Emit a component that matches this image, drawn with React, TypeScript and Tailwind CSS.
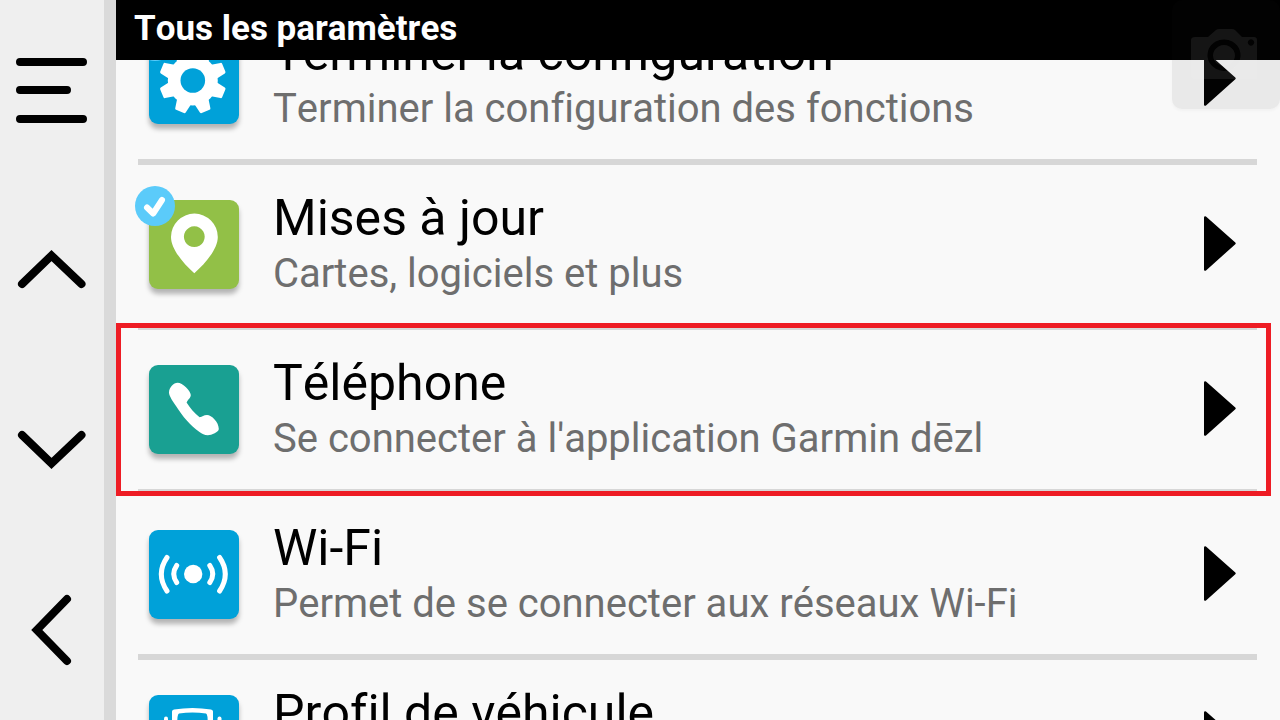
import type { ReactNode } from "react";

const GEAR_ANGLES = [22.5, 67.5, 112.5, 157.5, 202.5, 247.5, 292.5, 337.5];

function GearIcon() {
  return (
    <svg viewBox="0 0 90 89" className="size-full" aria-hidden="true">
      <g fill="#fff" stroke="#fff" strokeWidth="3" strokeLinejoin="round">
        <circle cx="43.8" cy="45.5" r="23.5" />
        {GEAR_ANGLES.map((a) => (
          <path key={a} d="M-6.5 -20 L-4.2 -32 L4.2 -32 L6.5 -20 Z" transform={`translate(43.8 45.5) rotate(${a})`} />
        ))}
      </g>
      <circle cx="43.8" cy="45.5" r="12.3" fill="#00a1d9" />
    </svg>
  );
}

function PinIcon() {
  return (
    <svg viewBox="0 0 90 89" className="size-full" aria-hidden="true">
      <path
        fill="#fff"
        fillRule="evenodd"
        d="M45.3 73.3 C35 64 22 49.5 22 37 A23.4 23.4 0 0 1 68.8 37 C68.8 49.5 55.6 64 45.3 73.3 Z M45.3 26.3 a10.4 10.4 0 1 0 0.01 0 Z"
      />
    </svg>
  );
}

function PhoneIcon() {
  return (
    <svg viewBox="0 0 90 89" className="size-full" aria-hidden="true">
      <path
        fill="#fff"
        d="M20 27.5 C20.2 22.5 24.5 17.8 28.6 17.8 C33.5 17.8 41.6 26 41.8 30 C41.8 33 38.8 34.5 37.6 37.6 C41 43 45.5 48.5 50.6 52.2 C53.5 51.8 54.5 50 58 50 C62.5 50 69.8 57 69.8 64 C69.8 67 62.5 70.2 58.8 70.2 C55.5 70.2 53 68.8 50.5 67 C41.5 60.5 33.5 51.5 27 41 C24 36.5 20 31 20 27.5 Z"
      />
    </svg>
  );
}

function SignalIcon() {
  return (
    <svg viewBox="0 0 90 89" className="size-full" aria-hidden="true">
      <circle cx="44.2" cy="44" r="9.2" fill="#fff" />
      <g fill="none" stroke="#fff" strokeWidth="5" strokeLinecap="round">
        <path d="M27.7 35.5 Q21.8 44 27.7 52.5" />
        <path d="M60.8 35.5 Q66.7 44 60.8 52.5" />
        <path d="M18 27.5 Q6.6 44 18 61" />
        <path d="M70.6 27.5 Q82 44 70.6 61" />
      </g>
    </svg>
  );
}

function TruckIcon() {
  return (
    <svg viewBox="0 0 90 89" className="size-full" aria-hidden="true">
      <path
        fill="#fff"
        fillRule="evenodd"
        d="M23 16.5 Q23 15 25 14.6 Q43.5 11.6 62 14.6 Q64 15 64 16.5 V60 Q64 64 60 64 H27 Q23 64 23 60 Z M30 18.6 Q43.5 16.6 57 18.6 Q58 19 58.5 22 L59.5 40 H27.5 L28.5 22 Q29 19 30 18.6 Z"
      />
      <g stroke="#fff" strokeWidth="4" strokeLinecap="round">
        <path d="M17 23.5 V38" />
        <path d="M70.5 23.5 V38" />
      </g>
    </svg>
  );
}

function CheckBadge() {
  return (
    <svg viewBox="0 0 40 40" className="absolute -top-3.5 -left-3.5 size-10" role="img" aria-label="À jour">
      <circle cx="20" cy="20" r="20" fill="#5bcbfa" />
      <path d="M12 21.5 L18.2 27.5 L27 14" fill="none" stroke="#fff" strokeWidth="6" strokeLinecap="round" strokeLinejoin="round" />
    </svg>
  );
}

function Arrow() {
  return (
    <svg viewBox="0 0 32 55" className="h-[55px] w-8 shrink-0" aria-hidden="true">
      <path d="M1.2 1.4 L30.5 27.3 L1.2 53.6 Z" stroke="#000" strokeWidth="2.4" strokeLinejoin="round" />
    </svg>
  );
}

type Item = {
  title: string;
  detail: string;
  tile: string;
  icon: ReactNode;
  checked?: boolean;
  highlighted?: boolean;
};

const ITEMS: Item[] = [
  {
    title: "Terminer la configuration",
    detail: "Terminer la configuration des fonctions",
    tile: "bg-[#00a1d9]",
    icon: <GearIcon />,
    checked: true,
  },
  {
    title: "Mises à jour",
    detail: "Cartes, logiciels et plus",
    tile: "bg-[#92c047]",
    icon: <PinIcon />,
    checked: true,
  },
  {
    title: "Téléphone",
    detail: "Se connecter à l'application Garmin dēzl",
    tile: "bg-[#19a092]",
    icon: <PhoneIcon />,
    highlighted: true,
  },
  {
    title: "Wi-Fi",
    detail: "Permet de se connecter aux réseaux Wi-Fi",
    tile: "bg-[#00a1d9]",
    icon: <SignalIcon />,
  },
  {
    title: "Profil de véhicule",
    detail: "",
    tile: "bg-[#00a1d9]",
    icon: <TruckIcon />,
  },
];

function Row({ item }: { item: Item }) {
  return (
    <li className="relative pr-[23px] pl-[22px]">
      <button
        type="button"
        className="flex h-[165px] w-full items-start border-b-6 border-[#d7d7d7] pr-[21px] pl-[11px] text-left"
      >
        <span className={`relative mt-[35px] h-[89px] w-[90px] shrink-0 rounded-[9px] shadow-[0_5px_5px_rgba(0,0,0,0.28)] ${item.tile}`}>
          {item.icon}
          {item.checked && <CheckBadge />}
        </span>
        <span className="mt-[23px] ml-[34px] flex min-w-0 flex-1 flex-col gap-0.5 whitespace-nowrap">
          <span className="text-[50px] leading-[60px] text-black">{item.title}</span>
          <span className="text-[40px] leading-[48px] text-[#6e6e6e]">{item.detail}</span>
        </span>
        <span className="mt-[51px]">
          <Arrow />
        </span>
      </button>
      {item.highlighted && (
        <span className="pointer-events-none absolute -top-[7px] right-[9px] -bottom-px left-0 z-10 border-5 border-[#ee1c24]" />
      )}
    </li>
  );
}

const NAV = [
  { label: "Menu", d: "M20 17 H83 M20 45 H67 M20 74 H83" },
  { label: "Défiler vers le haut", d: "M22 59 L51.5 30.5 L81.5 59" },
  { label: "Défiler vers le bas", d: "M22 30 L51.5 58.5 L81.5 30" },
  { label: "Retour", d: "M67 14 L36.8 45 L67 76" },
];

function SideNav() {
  return (
    <nav className="grid w-[116px] shrink-0 grid-rows-4 border-r-12 border-[#dadada] bg-[#efefef]">
      {NAV.map((n) => (
        <button key={n.label} type="button" aria-label={n.label} className="flex items-center justify-center">
          <svg viewBox="0 0 104 90" className="h-[90px] w-[104px]" fill="none" stroke="#000" strokeWidth="8" strokeLinecap="round" aria-hidden="true">
            <path d={n.d} />
          </svg>
        </button>
      ))}
    </nav>
  );
}

function CameraButton() {
  return (
    <button
      type="button"
      aria-label="Capture d'écran"
      className="absolute top-0 right-0 z-30 h-[109px] w-[108px] rounded-[10px] bg-[#181c1a]/7 shadow-[0_2px_3px_rgba(0,0,0,0.03)]"
    >
      <svg viewBox="0 0 108 109" className="size-full" aria-hidden="true">
        <path
          fill="#fff"
          fillOpacity="0.08"
          fillRule="evenodd"
          d="M23 37 H36 L44 30 Q45 29 47 29 H60 Q62 29 63 30 L70 37 H82 Q85 37 85 40 V79 H23 Q19 79 19 76 V40 Q19 37 23 37 Z M52 39.5 a16.5 15.7 0 1 0 0.01 0 Z M52 45 a11 10.5 0 1 1 -0.01 0 Z M79 39.3 a3.2 3.2 0 1 0 0.01 0 Z"
        />
      </svg>
    </button>
  );
}

export default function App() {
  return (
    <div className="relative flex h-screen overflow-hidden bg-[#f9f9f9] font-['Roboto',sans-serif] [font-kerning:none] [font-variant-ligatures:none]">
      <SideNav />
      <main className="flex min-w-0 flex-1 flex-col">
        <header className="z-20 flex h-15 shrink-0 items-center bg-black pl-[18px]">
          <h1 className="pb-0.5 text-[35px] leading-[42px] font-bold text-white">Tous les paramètres</h1>
        </header>
        <div className="min-h-0 flex-1 overflow-hidden">
          <ul className="-mt-15">
            {ITEMS.map((item) => (
              <Row key={item.title} item={item} />
            ))}
          </ul>
        </div>
      </main>
      <CameraButton />
    </div>
  );
}
